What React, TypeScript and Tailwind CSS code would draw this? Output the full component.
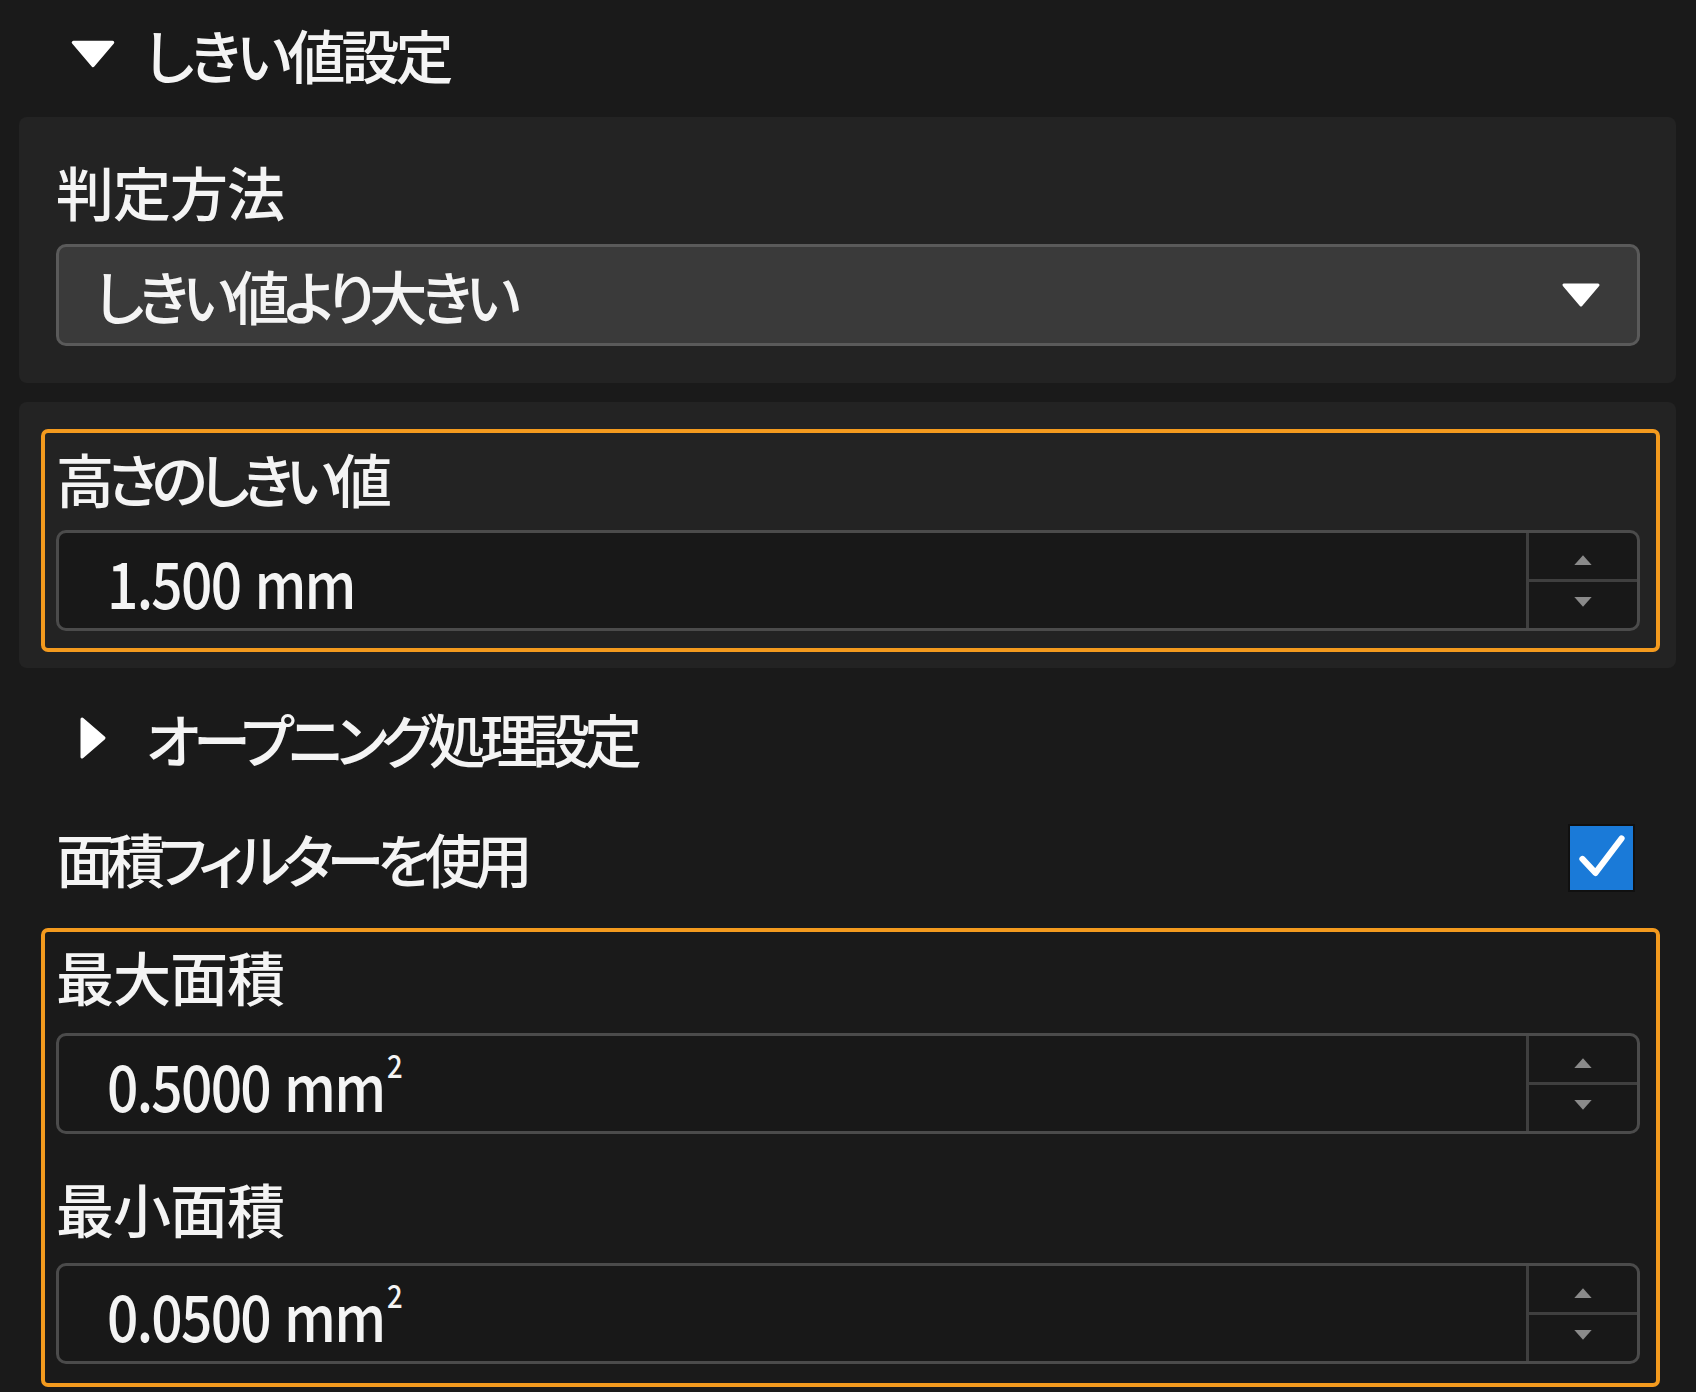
import React from 'react';

const font = "[font-family:'Noto_Sans_CJK_JP','Noto_Sans',sans-serif] [font-feature-settings:'palt']";

const TriDown = ({ className }: { className: string }) => (
  <svg viewBox="0 0 40 26" className={className}>
    <path d="M3 3 L37 3 L20 23 Z" fill="currentColor" stroke="currentColor" strokeWidth="3" strokeLinejoin="round" />
  </svg>
);

const Spin = ({ value, sup }: { value: string; sup?: boolean }) => (
  <div className="flex h-[101px] rounded-[10px] border-[3px] border-[#4b4b4b] bg-[#181818]">
    <div className="flex flex-1 items-center pl-[48px] text-[#f4f4f4]">
      <div className="flex origin-left scale-x-[0.86] items-center text-[64px] font-medium leading-none">
        <span className="tracking-[-2px] [word-spacing:4px]">{value}</span>
        {sup && <span className="ml-[3px] -translate-y-[20px] text-[32px] leading-none">2</span>}
      </div>
    </div>
    <div className="flex w-[111px] flex-col border-l-[3px] border-[#3f3f3f]">
      <div className="flex flex-1 items-center justify-center border-b-[3px] border-[#3f3f3f] pt-[6px]">
        <svg viewBox="0 0 20 12" className="h-[13px] w-[22px]">
          <path d="M2 11 L10 2 L18 11 Z" fill="#8a8a8a" />
        </svg>
      </div>
      <div className="flex flex-1 items-center justify-center pb-[6px]">
        <svg viewBox="0 0 20 12" className="h-[13px] w-[22px]">
          <path d="M2 1 L18 1 L10 10 Z" fill="#8a8a8a" />
        </svg>
      </div>
    </div>
  </div>
);

const Label = ({ text, className = '' }: { text: string; className?: string }) => (
  <div className={`flex h-[88px] items-center text-[58px] font-medium leading-none text-[#f4f4f4] ${className}`}>{text}</div>
);

export default function App() {
  return (
    <div className={`h-[1392px] w-[1696px] overflow-hidden bg-[#1a1a1a] ${font}`}>
      {/* しきい値設定 */}
      <div className="flex h-[117px] items-center pb-[10px] pl-[70px]">
        <TriDown className="h-[30px] w-[46px] text-white" />
        <span className="ml-[29px] text-[58px] font-medium leading-none tracking-[-4px] text-[#f4f4f4]">しきい値設定</span>
      </div>

      <div className="mx-[19px] mr-[20px] h-[266px] rounded-[8px] bg-[#232323] pl-[37px] pr-[36px] pt-[30px]">
        <Label text="判定方法" className="mb-[9px] tracking-[-1px]" />
        <div className="flex h-[102px] items-center rounded-[10px] border-[3px] border-[#5a5a5a] bg-[#3a3a3a] pl-[36px] pr-[36px]">
          <span className="flex-1 text-[58px] font-medium leading-none tracking-[-6px] text-[#f4f4f4]">しきい値より大きい</span>
          <TriDown className="h-[26px] w-[40px] text-white" />
        </div>
      </div>

      <div className="mx-[19px] mr-[20px] mt-[19px] h-[266px] rounded-[8px] bg-[#232323] pl-[22px] pr-[16px] pt-[27px]">
        <div className="rounded-[7px] border-4 border-[#f39a1e] pb-[17px] pl-[11px] pr-[16px]">
          <Label text="高さのしきい値" className="mb-[7px] h-[90px] tracking-[-7px]" />
          <Spin value="1.500 mm" />
        </div>
      </div>

      {/* オープニング処理設定 */}
      <div className="flex h-[140px] items-center pl-[78px]">
        <svg viewBox="0 0 30 46" className="h-[46px] w-[30px]">
          <path d="M4 4 L26 23 L4 42 Z" fill="white" stroke="white" strokeWidth="3" strokeLinejoin="round" />
        </svg>
        <span className="ml-[38px] text-[58px] font-medium leading-none tracking-[-6px] text-[#f4f4f4]">オープニング処理設定</span>
      </div>

      <div className="flex h-[100px] items-center pl-[56px] pr-[61px]">
        <span className="flex-1 text-[58px] font-medium leading-none tracking-[-7px] text-[#f4f4f4]">面積フィルターを使用</span>
        <div className="flex h-[68px] w-[67px] items-center justify-center border-2 border-[#101010] bg-[#1a7ad8]">
          <svg viewBox="0 0 60 60" className="h-[56px] w-[56px]">
            <path d="M9 31 L23 46 L51 9" fill="none" stroke="white" strokeWidth="6.5" strokeLinecap="round" strokeLinejoin="round" />
          </svg>
        </div>
      </div>

      <div className="ml-[41px] mt-[20px] w-[1619px] rounded-[7px] border-4 border-[#f39a1e] pb-[19px] pl-[11px] pr-[16px]">
        <Label text="最大面積" className="mb-[13px] tracking-[-1px]" />
        <Spin value="0.5000 mm" sup />
        <Label text="最小面積" className="mb-[11px] mt-[30px] tracking-[-1px]" />
        <Spin value="0.0500 mm" sup />
      </div>
    </div>
  );
}
